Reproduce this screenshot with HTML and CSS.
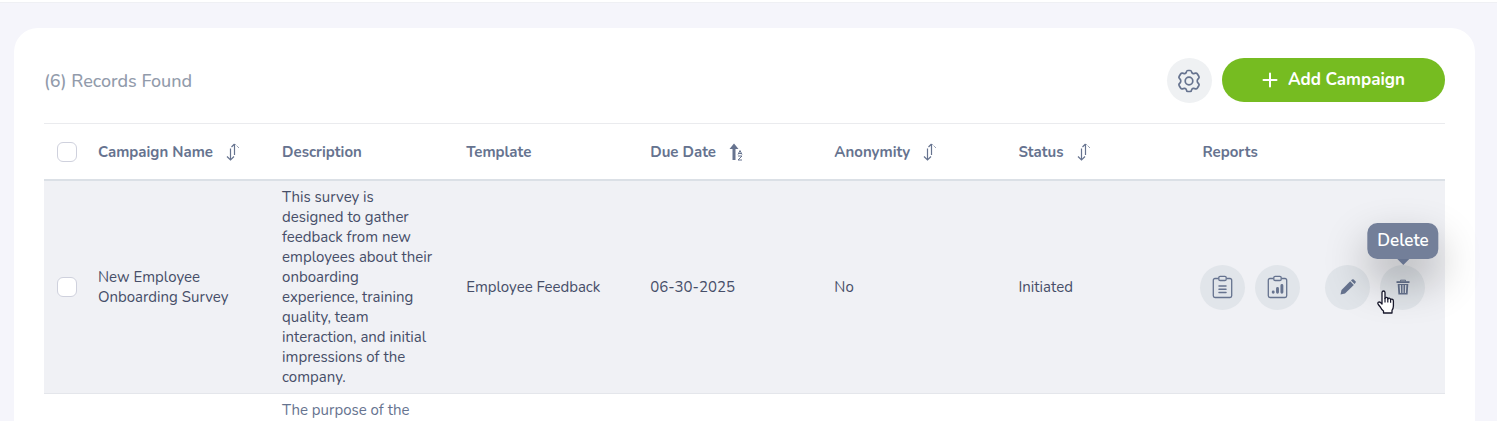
FILE: index.html
```html
<!DOCTYPE html>
<html lang="en">
<head>
    <meta charset="utf-8">
    <title>Campaigns</title>
    <link rel="stylesheet" href="styles.css">
</head>
<body>
    <svg class="sprite" aria-hidden="true">
        <symbol id="icon-sort" viewBox="0 0 16 20">
            <path d="M4.500 6.500v11.500M1 14.500l3.500 3.500 3.500-3.500M8.500 13V2M5.500 5l3-3" fill="none" stroke="currentColor" stroke-width="1.200"/>
            <path d="M9.500 2.500L13 6" fill="none" stroke="currentColor" stroke-width="1" stroke-dasharray="1 1"/>
        </symbol>
        <symbol id="icon-clipboard" viewBox="0 0 22 24">
            <path d="M6.500 3.500H3A1.700 1.700 0 0 0 1.300 5.200V20.800A1.700 1.700 0 0 0 3 22.500H18A1.700 1.700 0 0 0 19.700 20.800V5.200A1.700 1.700 0 0 0 18 3.500H14.500" fill="none" stroke="currentColor" stroke-width="1.300"/>
            <rect x="6.800" y="1.300" width="7.400" height="4.200" rx="1.300" fill="none" stroke="currentColor" stroke-width="1.300"/>
        </symbol>
    </svg>

    <div class="topbar"></div>
    <main class="card">
        <div class="toolbar">
            <h1>(6) Records Found</h1>
            <div class="toolbar-actions">
                <button class="btn-icon btn-settings" type="button" aria-label="Settings">
                    <svg width="24" height="24" viewBox="0 0 24 24" fill="none" stroke="currentColor" stroke-width="1.700" stroke-linejoin="round">
                        <path d="M9.200 3.600Q9.500 1.500 10.800 1.500H13.200Q14.500 1.500 14.800 3.600Q15.200 4.900 16.700 4.600L18.600 4.200Q19.700 4 20.400 5L21.900 7.500Q22.500 8.700 21.500 9.500Q20.200 10.500 20.200 12Q20.200 13.500 21.500 14.500Q22.500 15.300 21.900 16.500L20.400 19Q19.700 20 18.600 19.800L16.700 19.400Q15.200 19.100 14.800 20.400Q14.500 22.500 13.200 22.500H10.800Q9.500 22.500 9.200 20.400Q8.800 19.100 7.300 19.400L5.400 19.800Q4.300 20 3.600 19L2.100 16.500Q1.500 15.300 2.500 14.500Q3.800 13.500 3.800 12Q3.800 10.500 2.500 9.500Q1.500 8.700 2.100 7.500L3.600 5Q4.300 4 5.400 4.200L7.300 4.600Q8.800 4.900 9.200 3.600Z"/>
                        <circle cx="12" cy="12" r="3.800"/>
                    </svg>
                </button>
                <button class="btn-add" type="button">
                    <svg width="16" height="16" viewBox="0 0 16 16" stroke="currentColor" stroke-width="2" stroke-linecap="round">
                        <path d="M8 1.500v13M1.500 8h13"/>
                    </svg>
                    Add Campaign
                </button>
            </div>
        </div>

        <table class="campaigns">
            <colgroup>
                <col class="col-check">
                <col class="col-data" span="6">
                <col>
            </colgroup>
            <thead>
                <tr>
                    <th><input type="checkbox" aria-label="Select all campaigns"></th>
                    <th><span class="sort">Campaign Name <svg width="16" height="20"><use href="#icon-sort"/></svg></span></th>
                    <th>Description</th>
                    <th>Template</th>
                    <th>
                        <span class="sort">Due Date
                            <svg width="16" height="20" viewBox="0 0 16 20">
                                <path d="M5 1.500L9.500 7H6.500V18H3.500V7H.5Z" fill="currentColor"/>
                                <path d="M9 12.500L11 8.500L13 12.500M9.600 11.500H12.400M9 14H13L9 18H13" fill="none" stroke="currentColor" stroke-width="1"/>
                            </svg>
                        </span>
                    </th>
                    <th><span class="sort">Anonymity <svg width="16" height="20"><use href="#icon-sort"/></svg></span></th>
                    <th><span class="sort">Status <svg width="16" height="20"><use href="#icon-sort"/></svg></span></th>
                    <th>Reports</th>
                </tr>
            </thead>
            <tbody>
                <tr class="active">
                    <td><input type="checkbox" aria-label="Select New Employee Onboarding Survey"></td>
                    <td>New Employee Onboarding Survey</td>
                    <td class="description">This survey is designed to gather feedback from new employees about their onboarding experience, training quality, team interaction, and initial impressions of the company.</td>
                    <td>Employee Feedback</td>
                    <td>06-30-2025</td>
                    <td>No</td>
                    <td>Initiated</td>
                    <td>
                        <div class="row-actions">
                            <div class="group">
                                <button class="btn-icon" type="button" aria-label="Responses">
                                    <svg width="22" height="24" viewBox="0 0 22 24">
                                        <use href="#icon-clipboard"/>
                                        <path d="M7 11H14M7 14.200H14M7 17.400H14" stroke="currentColor" stroke-width="1.500" stroke-linecap="round"/>
                                    </svg>
                                </button>
                                <button class="btn-icon" type="button" aria-label="Report">
                                    <svg width="22" height="24" viewBox="0 0 22 24">
                                        <use href="#icon-clipboard"/>
                                        <path d="M6.200 17.200V17M10.500 17.200V13.500M14.900 17.200V10.500" stroke="currentColor" stroke-width="2.900" stroke-linecap="round"/>
                                    </svg>
                                </button>
                            </div>
                            <div class="group">
                                <button class="btn-icon" type="button" aria-label="Edit">
                                    <svg width="18" height="18" viewBox="0 0 18 18" fill="currentColor">
                                        <path d="M1.500 16.500L2.500 12L11.200 3.300L14.800 6.900L6 15.600Z"/>
                                        <path d="M12 2.600L13 1.600Q13.900 .9 14.800 1.600L16.400 3.200Q17.100 4.100 16.400 5L15.500 6Z"/>
                                    </svg>
                                </button>
                                <div class="tooltip-wrap">
                                    <button class="btn-icon" type="button" aria-label="Delete" aria-describedby="delete-tip">
                                        <svg width="14" height="16" viewBox="0 0 14 16">
                                            <path d="M4.500 2.500V1.200H9.500V2.500" fill="none" stroke="currentColor" stroke-width="1"/>
                                            <path d="M.5 2.200H13.500V4H.5Z" fill="currentColor"/>
                                            <path d="M1.700 5H12.300L11.600 15.500H2.400ZM3.600 6L4.100 14H5.100L4.900 6ZM6.500 6V14H7.500V6ZM9.100 6L8.900 14H9.900L10.400 6Z" fill="currentColor" fill-rule="evenodd"/>
                                        </svg>
                                    </button>
                                    <div class="tooltip" id="delete-tip" role="tooltip">Delete</div>
                                    <svg class="pointer" width="18" height="24" viewBox="0 0 18 24" aria-hidden="true">
                                        <path d="M5 14V2.500Q5.200 1 6.500 1Q7.900 1 8 2.500V8.500Q8.200 7.300 9.400 7.400Q10.700 7.500 10.800 9Q11 8 12.200 8.100Q13.500 8.300 13.600 9.700Q14 9 15 9.200Q16.400 9.500 16.400 11V16Q16.400 18.500 15 20.300V23H6.500V21Q4.500 19.500 3.300 17L1.300 14.500Q.4 13.200 1.300 12.300Q2.400 11.500 3.600 12.600Z" fill="#fff" stroke="#17172b" stroke-width="1.300" stroke-linejoin="round"/>
                                        <path d="M8 8v4.500M10.800 9v3.500M13.600 9.700v3" stroke="#17172b" stroke-width="1.200"/>
                                    </svg>
                                </div>
                            </div>
                        </div>
                    </td>
                </tr>
                <tr>
                    <td></td>
                    <td></td>
                    <td class="description">The purpose of the</td>
                    <td></td>
                    <td></td>
                    <td></td>
                    <td></td>
                    <td></td>
                </tr>
            </tbody>
        </table>
    </main>
</body>
</html>
```
FILE: styles.css
```css
* { box-sizing: border-box; }
body { margin: 0; height: 100vh; overflow: hidden; background: #f5f5fb; color: #66738f; font-family: Nunito, "Noto Sans", "Open Sans", sans-serif; font-size: 15px; line-height: 20px; }
button { font: inherit; border: none; padding: 0; cursor: pointer; }
svg { display: block; flex-shrink: 0; }
.sprite { display: none; }

.topbar { height: 3px; background: #fff; border-bottom: 1px solid #eff0f4; }
.card { margin: 25px 22px 0 14px; padding: 30px; background: #fff; border-radius: 24px; }

.toolbar { display: flex; justify-content: space-between; align-items: center; margin-bottom: 20px; }
.toolbar h1 { margin: 0; font-size: 18px; font-weight: 500; color: #929bab; }
.toolbar-actions { display: flex; gap: 10px; }
.btn-icon { width: 45px; height: 45px; border-radius: 50%; background: #e1e5ea; color: #66738f; display: flex; align-items: center; justify-content: center; }
.btn-settings { background: #eff1f3; }
.btn-add { height: 44px; padding: 0 40px; border-radius: 22px; background: #76bc21; color: #fff; font-size: 17px; font-weight: 700; display: flex; align-items: center; gap: 10px; }

.campaigns { width: 100%; table-layout: fixed; border-collapse: separate; border-spacing: 0; border-top: 1px solid #eaebee; }
.col-check { width: 44px; }
.col-data { width: 13.140%; }
.campaigns th, .campaigns td { padding: 6px 20px 6px 10px; text-align: left; border-bottom: 1px solid #e4e6eb; }
.campaigns th { height: 57px; font-weight: 700; border-bottom: 2px solid #dbe0e6; }
.campaigns th:first-child, .campaigns td:first-child { padding: 0 0 0 13px; }
.campaigns td { height: 213px; }
.campaigns .description { vertical-align: top; }
.campaigns .active td { background: #f0f1f5; color: #464e68; }
.sort { display: flex; align-items: center; gap: 13px; white-space: nowrap; }
input[type="checkbox"] { appearance: none; display: block; width: 20px; height: 20px; margin: 0; background: #fff; border: 1px solid #cfd1dd; border-radius: 6px; }

.row-actions { display: flex; gap: 25px; margin-left: -2px; }
.group { display: flex; gap: 10px; }
.tooltip-wrap { position: relative; }
.tooltip { position: absolute; bottom: 51px; left: 50%; transform: translateX(-50%); padding: 6px 10px; line-height: 24px; font-size: 17px; font-weight: 600; color: #fff; background: #737f99; border-radius: 10px; box-shadow: 0 20px 44px rgba(0, 0, 0, .3); }
.tooltip::after { content: ""; position: absolute; top: 100%; left: 50%; margin-left: -6px; border: 6px solid transparent; border-top-color: #66738f; border-bottom: none; }
.pointer { position: absolute; top: 25px; left: -3px; }
```
